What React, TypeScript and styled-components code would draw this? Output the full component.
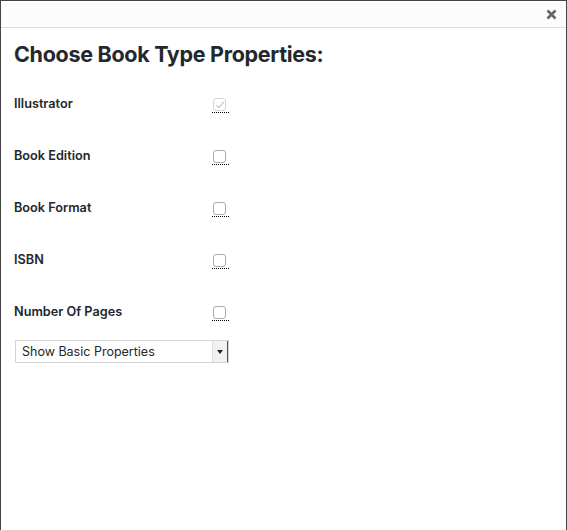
import React from 'react'
import styled, { createGlobalStyle } from 'styled-components'

const GlobalStyle = createGlobalStyle`
    html, body {
        margin: 0;
        padding: 0;
        background: #fff;
    }
    body {
        font-family: Inter, "Liberation Sans", Arial, sans-serif;
        color: #23282d;
    }
`

const Modal = styled.div`
    box-sizing: border-box;
    width: 567px;
    height: 530px;
    border: 1px solid #444;
    border-bottom: none;
    background: #fff;
    display: flex;
    flex-direction: column;
`

const Header = styled.div`
    height: 26px;
    background: #fcfcfc;
    border-bottom: 1px solid #ddd;
    display: flex;
    justify-content: flex-end;
    align-items: center;
    padding-right: 8px;
`

const Close = styled.button`
    border: none;
    background: none;
    padding: 0;
    width: 14px;
    height: 14px;
    display: flex;
    align-items: center;
    justify-content: center;
    color: #666;
    cursor: pointer;
`

const Body = styled.div`
    padding: 0 13px;
`

const Title = styled.h1`
    margin: 11px 0 0;
    font-size: 21.5px;
    line-height: 30px;
    font-weight: 700;
    letter-spacing: -0.3px;
`

const List = styled.div`
    margin-top: 24px;
    display: flex;
    flex-direction: column;
    gap: 32px;
`

const Row = styled.div`
    display: flex;
    align-items: center;
    height: 20px;
`

const Label = styled.label`
    width: 198px;
    font-size: 12.7px;
    font-weight: 600;
`

const Hint = styled.span`
    display: inline-flex;
    padding: 0 3px 1px 1px;
    margin-top: 4px;
    border-bottom: 1px dotted #000;
`

const Check = styled.input`
    appearance: none;
    margin: 0;
    width: 13px;
    height: 13px;
    box-sizing: border-box;
    border: 1px solid #a9a9a9;
    border-radius: 3px;
    background: #fff;
    position: relative;

    &:disabled {
        border-color: #d6d6d6;
    }

    &:checked::after {
        content: '';
        position: absolute;
        left: 3.5px;
        top: 1px;
        width: 3px;
        height: 7px;
        border: solid #bbb;
        border-width: 0 1.5px 1.5px 0;
        transform: rotate(40deg);
    }
`

const SelectWrap = styled.div`
    position: relative;
    width: 214px;
    margin-top: 19px;
    margin-left: 1px;
`

const Select = styled.select`
    appearance: none;
    box-sizing: border-box;
    width: 100%;
    height: 23px;
    margin: 0;
    padding: 0 20px 0 6px;
    border: 1px solid #d4d4d4;
    border-radius: 0;
    background: #fff;
    font-family: inherit;
    font-size: 12.5px;
    color: #23282d;
`

const Arrow = styled.span`
    position: absolute;
    top: 1px;
    right: 1px;
    bottom: 1px;
    width: 14px;
    background: #f1f1f1;
    border-left: 1px solid #e0e0e0;
    border-right: 1px solid #555;
    pointer-events: none;
    display: flex;
    align-items: center;
    justify-content: center;

    &::after {
        content: '';
        border-left: 3px solid transparent;
        border-right: 3px solid transparent;
        border-top: 4px solid #222;
    }
`

const properties = [
    { name: 'Illustrator', checked: true, disabled: true },
    { name: 'Book Edition' },
    { name: 'Book Format' },
    { name: 'ISBN' },
    { name: 'Number Of Pages' },
]

const App = () => {
    return (
        <>
            <GlobalStyle />
            <Modal>
                <Header>
                    <Close aria-label="Close">
                        <svg width="11" height="11" viewBox="0 0 11 11">
                            <path d="M1.5 1.5 L9.5 9.5 M9.5 1.5 L1.5 9.5" stroke="currentColor" strokeWidth="2.6" />
                        </svg>
                    </Close>
                </Header>
                <Body>
                    <Title>Choose Book Type Properties:</Title>
                    <List>
                        {properties.map((p) => (
                            <Row key={p.name}>
                                <Label>{p.name}</Label>
                                <Hint>
                                    <Check type="checkbox" defaultChecked={p.checked} disabled={p.disabled} />
                                </Hint>
                            </Row>
                        ))}
                    </List>
                    <SelectWrap>
                        <Select defaultValue="basic">
                            <option value="basic">Show Basic Properties</option>
                            <option value="all">Show All Properties</option>
                        </Select>
                        <Arrow />
                    </SelectWrap>
                </Body>
            </Modal>
        </>
    )
}

export default App
